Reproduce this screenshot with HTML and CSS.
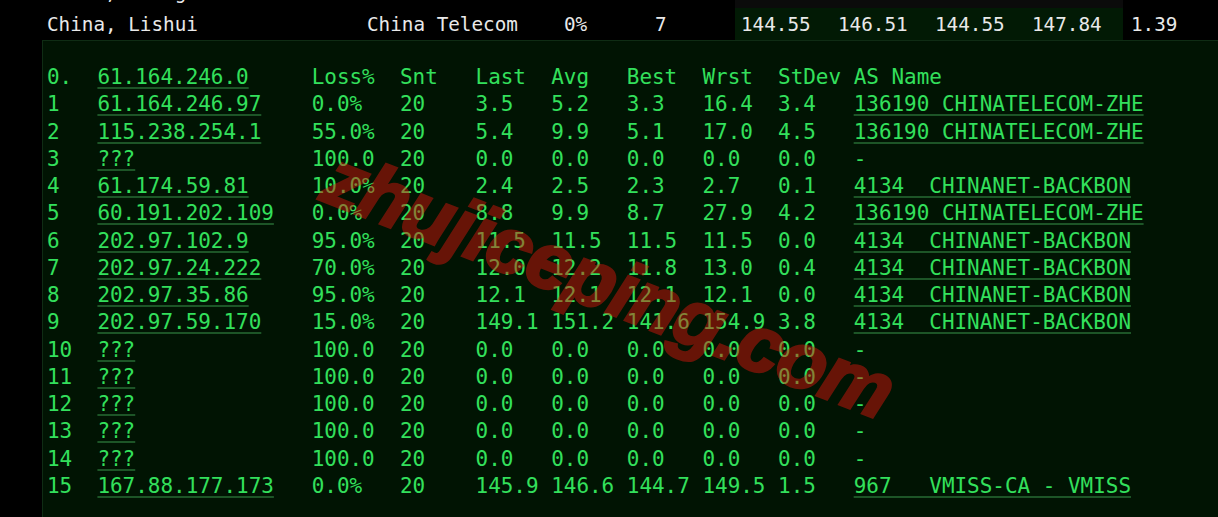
FILE: index.html
```html
<!DOCTYPE html>
<html>
<head>
<meta charset="utf-8">
<link rel="stylesheet" href="styles.css">
</head>
<body>
<div class="summary">
  <div class="srow prev">
    <span class="c">China, Shanghai</span><span class="c">China Telecom</span><span class="c">0%</span><span class="c">10</span>
    <span class="n g">30.12</span><span class="n g">30.40</span><span class="n g">29.98</span><span class="n g">31.02</span><span class="n last">0.31</span>
  </div>
  <div class="srow">
    <span class="c">China, Lishui</span><span class="c">China Telecom</span><span class="c">0%</span><span class="c">7</span>
    <span class="n gr">144.55</span><span class="n gr">146.51</span><span class="n gr">144.55</span><span class="n gr">147.84</span><span class="n last">1.39</span>
  </div>
</div>
<div class="panel">
  <div class="row"><span>0.</span><span><a class="u">61.164.246.0</a></span><span>Loss%</span><span>Snt</span><span>Last</span><span>Avg</span><span>Best</span><span>Wrst</span><span>StDev</span><span>AS Name</span></div>
  <div class="row"><span>1</span><span><a class="u">61.164.246.97</a></span><span>0.0%</span><span>20</span><span>3.5</span><span>5.2</span><span>3.3</span><span>16.4</span><span>3.4</span><span><a class="u">136190 CHINATELECOM-ZHE</a></span></div>
  <div class="row"><span>2</span><span><a class="u">115.238.254.1</a></span><span>55.0%</span><span>20</span><span>5.4</span><span>9.9</span><span>5.1</span><span>17.0</span><span>4.5</span><span><a class="u">136190 CHINATELECOM-ZHE</a></span></div>
  <div class="row"><span>3</span><span><a class="u">???</a></span><span>100.0</span><span>20</span><span>0.0</span><span>0.0</span><span>0.0</span><span>0.0</span><span>0.0</span><span>-</span></div>
  <div class="row"><span>4</span><span><a class="u">61.174.59.81</a></span><span>10.0%</span><span>20</span><span>2.4</span><span>2.5</span><span>2.3</span><span>2.7</span><span>0.1</span><span><a class="u">4134  CHINANET-BACKBON</a></span></div>
  <div class="row"><span>5</span><span><a class="u">60.191.202.109</a></span><span>0.0%</span><span>20</span><span>8.8</span><span>9.9</span><span>8.7</span><span>27.9</span><span>4.2</span><span><a class="u">136190 CHINATELECOM-ZHE</a></span></div>
  <div class="row"><span>6</span><span><a class="u">202.97.102.9</a></span><span>95.0%</span><span>20</span><span>11.5</span><span>11.5</span><span>11.5</span><span>11.5</span><span>0.0</span><span><a class="u">4134  CHINANET-BACKBON</a></span></div>
  <div class="row"><span>7</span><span><a class="u">202.97.24.222</a></span><span>70.0%</span><span>20</span><span>12.0</span><span>12.2</span><span>11.8</span><span>13.0</span><span>0.4</span><span><a class="u">4134  CHINANET-BACKBON</a></span></div>
  <div class="row"><span>8</span><span><a class="u">202.97.35.86</a></span><span>95.0%</span><span>20</span><span>12.1</span><span>12.1</span><span>12.1</span><span>12.1</span><span>0.0</span><span><a class="u">4134  CHINANET-BACKBON</a></span></div>
  <div class="row"><span>9</span><span><a class="u">202.97.59.170</a></span><span>15.0%</span><span>20</span><span>149.1</span><span>151.2</span><span>141.6</span><span>154.9</span><span>3.8</span><span><a class="u">4134  CHINANET-BACKBON</a></span></div>
  <div class="row"><span>10</span><span><a class="u">???</a></span><span>100.0</span><span>20</span><span>0.0</span><span>0.0</span><span>0.0</span><span>0.0</span><span>0.0</span><span>-</span></div>
  <div class="row"><span>11</span><span><a class="u">???</a></span><span>100.0</span><span>20</span><span>0.0</span><span>0.0</span><span>0.0</span><span>0.0</span><span>0.0</span><span>-</span></div>
  <div class="row"><span>12</span><span><a class="u">???</a></span><span>100.0</span><span>20</span><span>0.0</span><span>0.0</span><span>0.0</span><span>0.0</span><span>0.0</span><span>-</span></div>
  <div class="row"><span>13</span><span><a class="u">???</a></span><span>100.0</span><span>20</span><span>0.0</span><span>0.0</span><span>0.0</span><span>0.0</span><span>0.0</span><span>-</span></div>
  <div class="row"><span>14</span><span><a class="u">???</a></span><span>100.0</span><span>20</span><span>0.0</span><span>0.0</span><span>0.0</span><span>0.0</span><span>0.0</span><span>-</span></div>
  <div class="row"><span>15</span><span><a class="u">167.88.177.173</a></span><span>0.0%</span><span>20</span><span>145.9</span><span>146.6</span><span>144.7</span><span>149.5</span><span>1.5</span><span><a class="u">967   VMISS-CA - VMISS</a></span></div>
  <div class="watermark">zhujiceping.com</div>
</div>
</body>
</html>
```
FILE: styles.css
```css
html, body {
  margin: 0;
  padding: 0;
  background: #000;
  overflow: hidden;
}
body {
  width: 1218px;
  height: 517px;
}
.summary {
  margin-top: -24px;
  padding-left: 47px;
  font-family: "DejaVu Sans Mono", "Liberation Mono", monospace;
  font-size: 19.3px;
  color: #e9e9e9;
}
.srow {
  display: grid;
  grid-template-columns: 320px 197px 91px 80px 97px 97px 97px 97px 1fr;
  height: 32px;
  line-height: 33px;
}
.srow .c {
  white-space: pre;
}
.srow .n {
  padding-left: 6px;
}
.srow .g {
  background: #0b0b0b;
}
.srow .gr {
  background: #021a05;
}
.srow .last {
  padding-left: 8px;
  background: #000;
}
.panel {
  position: relative;
  margin-left: 42px;
  background: #011403;
  border-top: 1px solid #0f2c14;
  border-left: 1px solid #0f2c14;
  padding: 23px 0 40px 4px;
  font-family: "DejaVu Sans Mono", "Liberation Mono", monospace;
  font-size: 20.95px;
  line-height: 27.27px;
  color: #33e05c;
  overflow: hidden;
}
.row {
  display: grid;
  grid-template-columns: 4ch 17ch 7ch 6ch 6ch 6ch 6ch 6ch 6ch 1fr;
  white-space: pre;
}
.u {
  text-decoration: underline;
  text-decoration-color: #1d5527;
  text-decoration-thickness: 2px;
  text-underline-offset: 3px;
}
.watermark {
  position: absolute;
  left: 566px;
  top: 243px;
  transform: translate(-50%, -50%) rotate(21.5deg);
  font-family: "Liberation Sans", Arial, sans-serif;
  font-weight: bold;
  font-style: italic;
  font-size: 79px;
  line-height: 1;
  letter-spacing: -1px;
  color: #e4160e;
  -webkit-text-stroke: 3px #e4160e;
  opacity: 0.45;
  white-space: nowrap;
}
```
